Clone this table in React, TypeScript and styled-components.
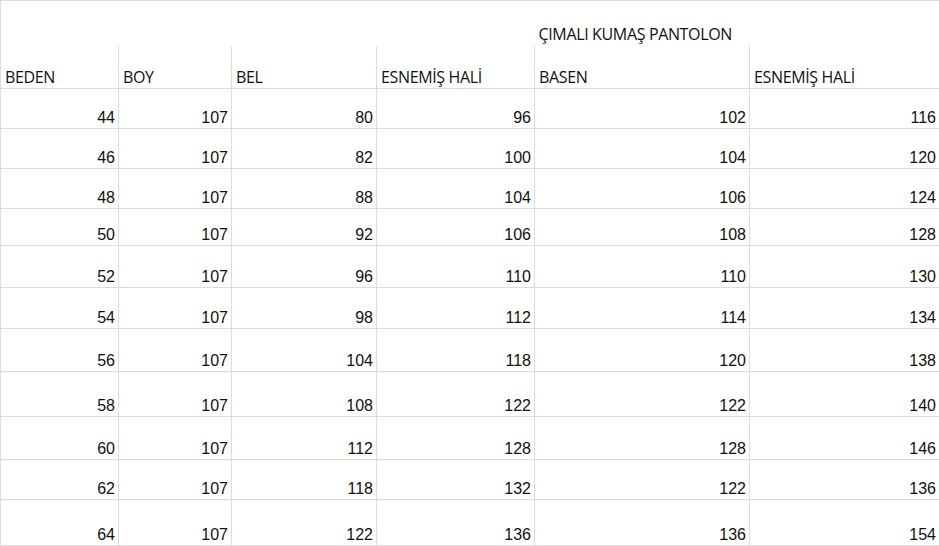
import { createGlobalStyle, styled } from "styled-components";

const GlobalStyle = createGlobalStyle`
    html, body {
        margin: 0;
        padding: 0;
        background: #ffffff;
    }
`;

const widths = [118, 113, 145, 158, 215, 190];

const headers = ["BEDEN", "BOY", "BEL", "ESNEMİŞ HALİ", "BASEN", "ESNEMİŞ HALİ"];

const rows: { height: number; values: number[] }[] = [
    { height: 40, values: [44, 107, 80, 96, 102, 116] },
    { height: 40, values: [46, 107, 82, 100, 104, 120] },
    { height: 40, values: [48, 107, 88, 104, 106, 124] },
    { height: 37, values: [50, 107, 92, 106, 108, 128] },
    { height: 42, values: [52, 107, 96, 110, 110, 130] },
    { height: 41, values: [54, 107, 98, 112, 114, 134] },
    { height: 43, values: [56, 107, 104, 118, 120, 138] },
    { height: 45, values: [58, 107, 108, 122, 122, 140] },
    { height: 43, values: [60, 107, 112, 128, 128, 146] },
    { height: 40, values: [62, 107, 118, 132, 122, 136] },
    { height: 46, values: [64, 107, 122, 136, 136, 154] },
];

export default function App() {
    return (
        <>
            <GlobalStyle />
            <Sheet>
                <colgroup>
                    {widths.map((w, i) => (
                        <col key={i} style={{ width: w }} />
                    ))}
                </colgroup>
                <tbody>
                    <TitleRow>
                        <TitleCell colSpan={4} />
                        <TitleCell>ÇIMALI KUMAŞ PANTOLON</TitleCell>
                        <TitleCell />
                    </TitleRow>
                    <HeaderRow>
                        {headers.map((h, i) => (
                            <HeaderCell key={i}>{h}</HeaderCell>
                        ))}
                    </HeaderRow>
                    {rows.map((row, r) => (
                        <tr key={r} style={{ height: row.height }}>
                            {row.values.map((v, i) => (
                                <NumberCell key={i}>{v}</NumberCell>
                            ))}
                        </tr>
                    ))}
                </tbody>
            </Sheet>
        </>
    );
}

const Sheet = styled.table`
    width: 939px;
    table-layout: fixed;
    border-collapse: collapse;
    border-top: 1px solid #dcdcdc;
    border-left: 1px solid #dcdcdc;
    color: #111111;
`;

const TitleRow = styled.tr`
    height: 45px;
`;

const TitleCell = styled.td`
    padding: 0 4px 3px;
    vertical-align: bottom;
    font-family: "Open Sans", "Noto Sans", sans-serif;
    font-size: 16px;
    line-height: 18px;
    letter-spacing: -0.35px;
    white-space: nowrap;
`;

const HeaderRow = styled.tr`
    height: 43px;
`;

const HeaderCell = styled.td`
    padding: 0 4px 2px;
    vertical-align: bottom;
    border-right: 1px solid #dcdcdc;
    border-bottom: 1px solid #dcdcdc;
    font-family: "Open Sans", "Noto Sans", sans-serif;
    font-size: 16px;
    line-height: 18px;
    letter-spacing: -0.35px;
    white-space: nowrap;
`;

const NumberCell = styled.td`
    padding: 0 3px 1px 4px;
    vertical-align: bottom;
    text-align: right;
    border-right: 1px solid #dcdcdc;
    border-bottom: 1px solid #dcdcdc;
    font-family: "Liberation Sans", Arial, sans-serif;
    font-size: 16px;
    line-height: 18px;
`;
